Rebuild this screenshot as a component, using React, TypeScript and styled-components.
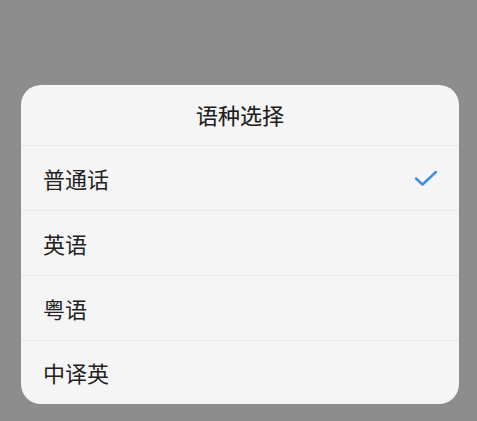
import { createGlobalStyle, styled } from "styled-components";

const GlobalStyle = createGlobalStyle`
  html, body {
    margin: 0;
    padding: 0;
    background: #8d8d8d;
  }
  body {
    font-family: "Noto Sans CJK SC", "Noto Sans", sans-serif;
  }
`;

const Page = styled.div`
  width: 477px;
  height: 421px;
  padding: 85px 0 0 21px;
  box-sizing: border-box;
`;

const Sheet = styled.div`
  width: 438px;
  background: #f5f5f5;
  border-radius: 20px;
  overflow: hidden;
`;

const Title = styled.div`
  height: 61px;
  box-sizing: border-box;
  display: flex;
  align-items: center;
  justify-content: center;
  padding-bottom: 3px;
  font-size: 22px;
  font-weight: 400;
  -webkit-text-stroke: 0.15px #1c1c1c;
  color: #1c1c1c;
  border-bottom: 1px solid #e9e9e9;
`;

const Row = styled.div<{ $last?: boolean }>`
  height: ${(p) => (p.$last ? 63 : 65)}px;
  box-sizing: border-box;
  display: flex;
  align-items: center;
  justify-content: space-between;
  padding: 0 21px 1px 22px;
  font-size: 22px;
  color: #222;
  border-bottom: ${(p) => (p.$last ? "none" : "1px solid #e9e9e9")};
`;

const Check = () => (
  <svg width="24" height="18" viewBox="0 0 24 18" fill="none">
    <path d="M2 9.5 L8.5 15.5 L22 3" stroke="#3b8fe4" strokeWidth="2.4" strokeLinecap="round" strokeLinejoin="round" />
  </svg>
);

const options = ["普通话", "英语", "粤语", "中译英"];

export default function App() {
  return (
    <>
      <GlobalStyle />
      <Page>
        <Sheet>
          <Title>语种选择</Title>
          {options.map((o, i) => (
            <Row key={o} $last={i === options.length - 1}>
              <span>{o}</span>
              {i === 0 && <Check />}
            </Row>
          ))}
        </Sheet>
      </Page>
    </>
  );
}
